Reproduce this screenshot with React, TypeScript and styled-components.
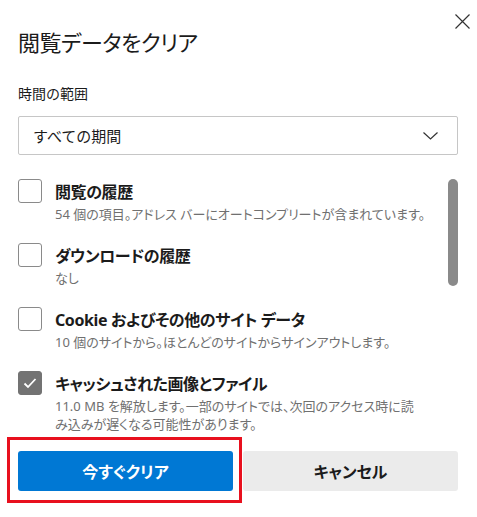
import styled, { createGlobalStyle } from "styled-components";

const GlobalStyle = createGlobalStyle`
	html, body {
		margin: 0;
		background: #ffffff;
	}
	body {
		font-family: "Noto Sans", "Noto Sans CJK JP", sans-serif;
		color: #1b1b1b;
	}
	* {
		box-sizing: border-box;
	}
`;

const Dialog = styled.div`
	width: 477px;
	height: 517px;
	padding: 0 19px 0 18px;
	display: flex;
	flex-direction: column;
	overflow: hidden;
`;

const Header = styled.div`
	display: flex;
	justify-content: space-between;
	align-items: flex-start;
`;

const Title = styled.h1`
	margin: 0;
	padding-top: 27px;
	font-size: 22px;
	line-height: 30px;
	font-weight: 400;
	letter-spacing: -0.5px;
	font-feature-settings: "palt";
	color: #1b1b1b;
`;

const CloseButton = styled.button`
	margin: 14px -12px 0 0;
	padding: 0;
	width: 15px;
	height: 15px;
	border: none;
	background: none;
	display: flex;
	cursor: pointer;
`;

const FieldLabel = styled.div`
	margin-top: 27px;
	font-size: 14px;
	line-height: 20px;
	color: #1b1b1b;
`;

const Select = styled.div`
	margin-top: 12px;
	height: 39px;
	border: 1px solid #c6c6c6;
	border-radius: 2px;
	padding: 0 19px 0 14px;
	display: flex;
	align-items: center;
	justify-content: space-between;
	font-size: 15px;
	color: #1b1b1b;
`;

const ScrollArea = styled.div`
	margin-top: 14px;
	height: 266px;
	display: flex;
	overflow: hidden;
`;

const List = styled.div`
	flex: 1;
	padding-top: 10px;
`;

const ScrollTrack = styled.div`
	width: 10px;
	padding-top: 10px;
`;

const Thumb = styled.div`
	height: 107px;
	border-radius: 5px;
	background: #8a8a8a;
`;

const Row = styled.div`
	display: flex;
	gap: 13px;
	padding-bottom: 20px;
`;

const Box = styled.span<{ $checked?: boolean }>`
	flex: none;
	width: 24px;
	height: 24px;
	border-radius: 3px;
	border: 1px solid ${(p) => (p.$checked ? "#737373" : "#8a8a8a")};
	background: ${(p) => (p.$checked ? "#737373" : "#ffffff")};
	display: flex;
	align-items: center;
	justify-content: center;
`;

const Texts = styled.div`
	margin-top: 2px;
	display: flex;
	flex-direction: column;
`;

const ItemLabel = styled.div`
	font-size: 16px;
	line-height: 22px;
	font-weight: 700;
	letter-spacing: -0.4px;
	font-feature-settings: "palt";
	color: #1b1b1b;
`;

const ItemDesc = styled.div`
	margin-top: 2px;
	max-width: 380px;
	font-size: 13px;
	line-height: 18px;
	white-space: pre-line;
	font-feature-settings: "palt";
	color: #707070;
`;

const Footer = styled.div`
	margin-top: 16px;
	display: flex;
	gap: 10px;
`;

const Slot = styled.div`
	flex: 1;
	position: relative;
	display: flex;
`;

const Highlight = styled.div`
	position: absolute;
	inset: -14px -9px -12px -11px;
	border: 3px solid #e8101e;
	pointer-events: none;
`;

const Button = styled.button<{ $primary?: boolean }>`
	flex: 1;
	height: 40px;
	border: none;
	border-radius: 3px;
	font-family: inherit;
	font-size: 16px;
	font-weight: 700;
	font-feature-settings: "palt";
	cursor: pointer;
	color: ${(p) => (p.$primary ? "#ffffff" : "#1b1b1b")};
	background: ${(p) => (p.$primary ? "#0078d4" : "#ebebeb")};
`;

type Item = { label: string; desc: string; checked?: boolean };

const items: Item[] = [
	{ label: "閲覧の履歴", desc: "54 個の項目。アドレス バーにオートコンプリートが含まれています。" },
	{ label: "ダウンロードの履歴", desc: "なし" },
	{ label: "Cookie およびその他のサイト データ", desc: "10 個のサイトから。ほとんどのサイトからサインアウトします。" },
	{
		label: "キャッシュされた画像とファイル",
		desc: "11.0 MB を解放します。一部のサイトでは、次回のアクセス時に読\nみ込みが遅くなる可能性があります。",
		checked: true,
	},
];

function CheckItem({ label, desc, checked }: Item) {
	return (
		<Row>
			<Box $checked={checked}>
				{checked && (
					<svg width="16" height="16" viewBox="0 0 16 16">
						<path d="M2.5 8.5 L6 12 L13.5 4" fill="none" stroke="#ffffff" strokeWidth="1.8" />
					</svg>
				)}
			</Box>
			<Texts>
				<ItemLabel>{label}</ItemLabel>
				<ItemDesc>{desc}</ItemDesc>
			</Texts>
		</Row>
	);
}

export default function App() {
	return (
		<>
			<GlobalStyle />
			<Dialog>
				<Header>
					<Title>閲覧データをクリア</Title>
					<CloseButton aria-label="閉じる">
						<svg width="15" height="15" viewBox="0 0 15 15">
							<path d="M0.5 0.5 L14.5 14.5 M14.5 0.5 L0.5 14.5" stroke="#333333" strokeWidth="1.2" />
						</svg>
					</CloseButton>
				</Header>
				<FieldLabel>時間の範囲</FieldLabel>
				<Select>
					<span>すべての期間</span>
					<svg width="15" height="8" viewBox="0 0 15 8">
						<path d="M0.5 0.5 L7.5 7 L14.5 0.5" fill="none" stroke="#333333" strokeWidth="1.2" />
					</svg>
				</Select>
				<ScrollArea>
					<List>
						{items.map((it) => (
							<CheckItem key={it.label} {...it} />
						))}
					</List>
					<ScrollTrack>
						<Thumb />
					</ScrollTrack>
				</ScrollArea>
				<Footer>
					<Slot>
						<Button $primary>今すぐクリア</Button>
						<Highlight />
					</Slot>
					<Slot>
						<Button>キャンセル</Button>
					</Slot>
				</Footer>
			</Dialog>
		</>
	);
}
